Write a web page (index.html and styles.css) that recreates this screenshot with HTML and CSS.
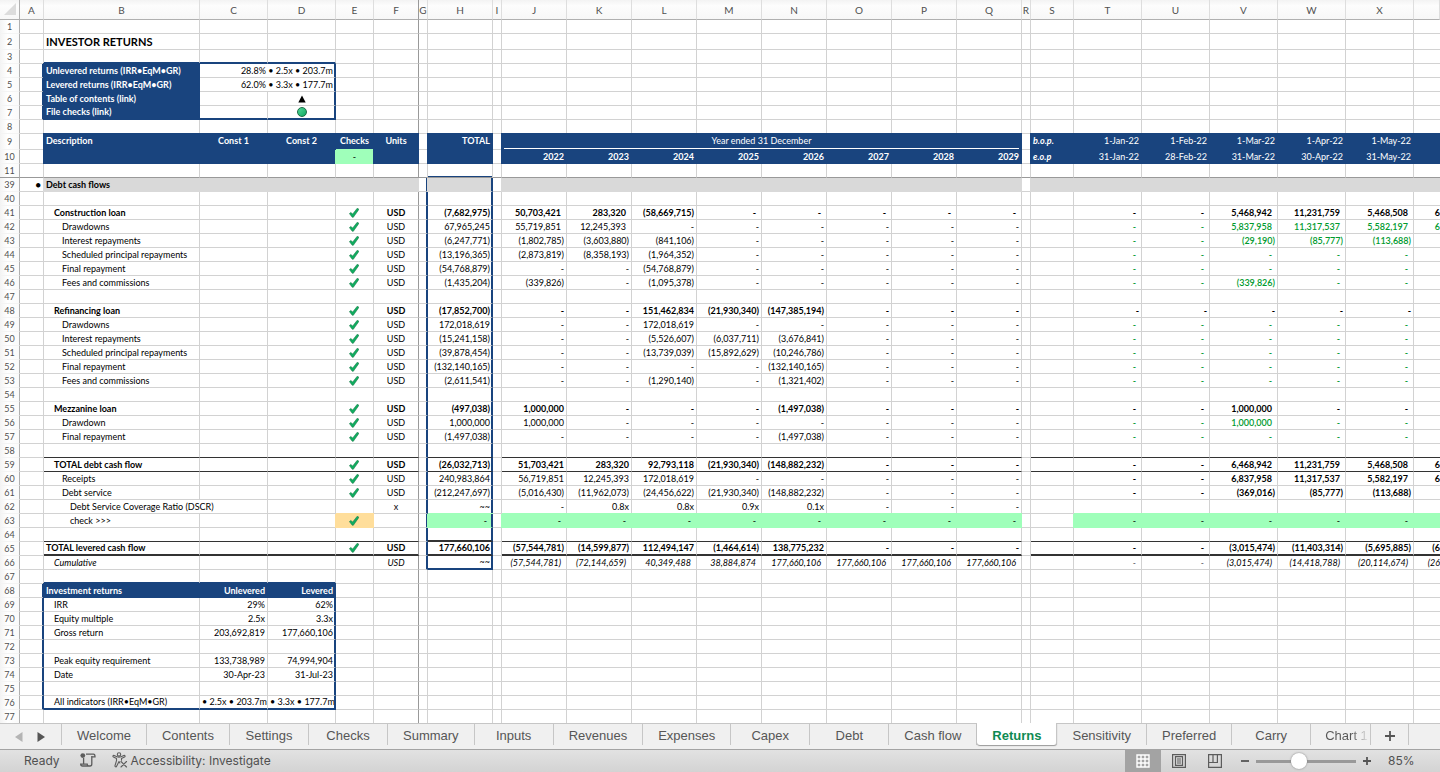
FILE: index.html
```html
<!DOCTYPE html>
<html lang="en">
<head>
<meta charset="utf-8">
<title>Investor Returns</title>
<link rel="stylesheet" href="styles.css">
</head>
<body>
<main class="sheet">
  <table class="grid" id="grid">
    <colgroup>
      <col class="w-head"><col class="w-a"><col class="w-b"><col class="w-month" span="2"><col class="w-e"><col class="w-f">
      <col class="w-gap"><col class="w-year"><col class="w-gap"><col class="w-year" span="8"><col class="w-gap">
      <col class="w-s"><col class="w-month" span="5"><col>
    </colgroup>
    <thead><tr id="letters"></tr></thead>
    <tbody id="rows"></tbody>
  </table>
</main>

<nav class="tabs" aria-label="Sheets">
  <div class="tab-nav">
    <button class="arrow" aria-label="Previous sheets"><svg width="8" height="10" viewBox="0 0 8 10"><path d="M7.500 0v10L0 5z" fill="#b4b4b4"/></svg></button>
    <button class="arrow" aria-label="Next sheets"><svg width="8" height="10" viewBox="0 0 8 10"><path d="M.5 0v10L8 5z" fill="#555"/></svg></button>
  </div>
  <button class="tab">Welcome</button>
  <button class="tab">Contents</button>
  <button class="tab">Settings</button>
  <button class="tab">Checks</button>
  <button class="tab">Summary</button>
  <button class="tab">Inputs</button>
  <button class="tab">Revenues</button>
  <button class="tab">Expenses</button>
  <button class="tab">Capex</button>
  <button class="tab">Debt</button>
  <button class="tab">Cash flow</button>
  <button class="tab active" aria-current="page">Returns</button>
  <button class="tab">Sensitivity</button>
  <button class="tab">Preferred</button>
  <button class="tab">Carry</button>
  <button class="tab fading">Chart 1</button>
  <button class="tab add" aria-label="Add sheet"><svg width="10" height="10" viewBox="0 0 10 10"><path d="M5 0v10M0 5h10" stroke="#555" stroke-width="1.800"/></svg></button>
</nav>

<footer class="status">
  <span class="ready">Ready</span>
  <button class="tool macro" aria-label="Record macro"><svg width="16" height="14" viewBox="0 0 16 14" fill="none" stroke="#5c5c5c" stroke-width="1.300"><circle cx="2.800" cy="2.600" r="2.400" fill="#5c5c5c" stroke="none"/><path d="M6 1.200h7.500c1.300 0 1.500 1 1.500 2.600h-3.200M11.800 3v8c0 1.200-.6 2-1.800 2H2.500c-1.200 0-1.800-.6-1.800-1.800h6.500c0 1.200.6 1.800 1.600 1.800M3.600 5v6"/></svg></button>
  <button class="tool access"><svg width="16" height="16" viewBox="0 0 16 16" fill="none" stroke="#5c5c5c" stroke-width="1.100" stroke-linejoin="round" stroke-linecap="round"><circle cx="7" cy="2.400" r="1.700"/><path d="M5 4.700 2.200 3.400C1 3 .4 4.500 1.500 5l3 1.400v2.300L3 13.700c-.3 1.200 1.200 1.600 1.600.6L7 9.500l.8 1.400M9 4.700l2.800-1.300c1.200-.4 1.800 1.100.7 1.600l-3 1.400v1.800M5 4.700c1.300.5 2.700.5 4 0M9 9.500l5.500 5.500M14.500 9.500 9 15"/></svg><span>Accessibility: Investigate</span></button>
  <div class="views">
    <button class="view on" aria-label="Normal view"><svg width="14" height="14" viewBox="0 0 14 14" fill="none" stroke="#fff" stroke-width="1.400"><path d="M1 1h12v12H1zM1 5h12M1 9h12M5 1v12M9 1v12"/></svg></button>
    <button class="view" aria-label="Page layout view"><svg width="14" height="14" viewBox="0 0 14 14" fill="none" stroke="#5c5c5c" stroke-width="1.200"><path d="M.6.600h12.800v12.800H.6zM3.500 2.600h7v8.800h-7zM5 5h4M5 7h4M5 9h4"/></svg></button>
    <button class="view" aria-label="Page break preview"><svg width="14" height="14" viewBox="0 0 14 14" fill="none" stroke="#5c5c5c" stroke-width="1.200"><path d="M.6.600h12.800v12.800H.6zM.6 8.500h8.800V.600M5 .600v7.900"/></svg></button>
  </div>
  <div class="zoom">
    <button class="tool" aria-label="Zoom out"><svg width="8" height="8" viewBox="0 0 8 8"><path d="M0 4h8" stroke="#555" stroke-width="1.800"/></svg></button>
    <input class="slider" type="range" min="0" max="100" value="42" aria-label="Zoom">
    <button class="tool" aria-label="Zoom in"><svg width="8" height="8" viewBox="0 0 8 8"><path d="M0 4h8M4 0v8" stroke="#555" stroke-width="1.800"/></svg></button>
    <span class="percent">85%</span>
  </div>
</footer>
<script src="sheet.js"></script>
</body>
</html>
```
FILE: styles.css
```css
* { box-sizing: border-box; }
html, body { height: 100%; }
body {
  margin: 0;
  display: flex;
  flex-direction: column;
  overflow: hidden;
  background: #fff;
  color: #000;
  font-family: Lato, "Open Sans", sans-serif;
  font-size: 9px;
}
button {
  border: 0;
  padding: 0;
  background: none;
  font: inherit;
  color: inherit;
}
svg { display: block; }

/* Sheet */
.sheet { flex: 1; min-height: 0; overflow: hidden; }
.grid {
  width: 100%;
  min-width: 1440px;
  table-layout: fixed;
  border-collapse: separate;
  border-spacing: 0;
}
.w-head { width: 20px; }
.w-a { width: 24px; }
.w-b { width: 156px; }
.w-month { width: 68px; }
.w-e { width: 38px; }
.w-f { width: 45px; }
.w-gap { width: 9px; }
.w-year { width: 65px; }
.w-s { width: 43px; }

.grid th, .grid td {
  height: 14px;
  padding: 1px 2px 0;
  border: solid #d2d2d2;
  border-width: 0 1px 1px 0;
  line-height: 12px;
  white-space: nowrap;
  overflow: hidden;
  text-align: right;
  vertical-align: middle;
}
.grid thead th {
  height: 20px;
  padding: 0;
  border-color: #dedede;
  border-bottom-color: #b0b0b0;
  background: linear-gradient(#f3f3f3, #fdfdfd 30%, #f7f7f7);
  color: #505050;
  font-size: 10px;
  font-weight: 400;
  text-align: center;
}
.grid tbody th {
  padding: 1px 0 0;
  border-color: #f4f4f4;
  border-right-color: #b0b0b0;
  background: linear-gradient(90deg, #f3f3f3, #fff 40%, #fafafa);
  color: #505050;
  font-size: 9px;
  font-weight: 400;
  text-align: center;
}
.grid thead th.corner { border-right-color: #b0b0b0; }
.corner svg { margin: 0 0 0 auto; }
.grid tr.snug td, .grid tr.snug th { padding-top: 0; }
.grid tr.tall td, .grid tr.tall th { height: 16px; }
.grid tr.heading td { vertical-align: top; }
.grid td.text { text-align: left; }
.grid td.center { text-align: center; }
.grid td.in1 { padding-left: 10px; }
.grid td.in2 { padding-left: 18px; }
.grid td.in3 { padding-left: 26px; }
.grid td.pad { padding-right: 5px; }
.grid td.icon { padding: 0 4px 0 2px; }
.grid td.cut { padding-left: 0; padding-right: 0; border-right: 0; }
.grid td.bold { font-weight: 700; }
.grid td.italic { font-style: italic; }
.grid td.green { color: #009a2e; font-weight: 600; }
.grid td.title { font-size: 11px; font-weight: 700; }

/* Fills run over the grid lines on every side */
.grid td.navy {
  background: #19447e;
  border-color: #19447e;
  box-shadow: -1px 0 #19447e, 0 -1px #19447e, -1px -1px #19447e;
  color: #fff;
}
.grid td.grey { background: #d9d9d9; border-color: #d9d9d9; box-shadow: -1px 0 #d9d9d9; }
.grid td.mint {
  background: #9fffba;
  border-color: #9fffba;
  box-shadow: -1px 0 #9fffba, 0 -1px #9fffba;
  color: #000;
}
.grid td.amber { background: #ffde9b; border-color: #ffde9b; box-shadow: -1px 0 #ffde9b, 0 -1px #ffde9b; }

/* Rules and boxes */
.grid td.rule { border-bottom-color: #333; }
.grid td.rule2 { border-bottom: 2px solid #333; }
.grid td.box-r { border-right: 2px solid #19447e; padding-right: 1px; }
.grid td.box-r.pad { padding-right: 4px; }
.grid td.box-b { border-bottom: 2px solid #19447e; }
.grid .pane-b { border-bottom-color: #999; }
.grid td.pane-b.box-top { box-shadow: inset 0 -1px #19447e; }
.grid .pane-r { border-right-color: #999; }
.year-head {
  display: block;
  height: 14px;
  border-bottom: 1px solid #fff;
}
.link { display: block; color: inherit; text-decoration: none; }
.triangle, .tick { margin: 0 auto; }
.dot {
  display: block;
  width: 10px;
  height: 10px;
  margin: 0 auto;
  border: 1px solid #1a6b45;
  border-radius: 50%;
  background: linear-gradient(135deg, #4fd896, #12a862);
}

/* Sheet tabs */
.tabs {
  display: flex;
  height: 26px;
  border-top: 1px solid #c6c6c6;
  background: #f0f0f0;
  color: #565656;
  font-family: "Liberation Sans", Arial, sans-serif;
  font-size: 13px;
}
.tab-nav {
  display: flex;
  justify-content: space-between;
  width: 62px;
  height: 21px;
  padding: 5px 16px 0 15px;
  border-right: 1px solid #c6c6c6;
}
.tab {
  min-width: 79px;
  height: 21px;
  padding: 2px 15px 0;
  border-right: 1px solid #c6c6c6;
  white-space: nowrap;
}
.tab.active {
  height: 22px;
  margin-top: -1px;
  border-radius: 0 0 3px 3px;
  background: #fff;
  box-shadow: 0 1px 1px #999;
  color: #0e8a52;
  font-weight: 700;
}
.tab.fading {
  min-width: 0;
  width: 60px;
  padding: 2px 0 0 14px;
  text-align: left;
  color: transparent;
  background: linear-gradient(90deg, #565656 70%, #f0f0f0 98%) text;
}
.tab.add { min-width: 0; width: 38px; padding: 2px 14px 0; }

/* Status bar */
.status {
  display: flex;
  align-items: center;
  height: 23px;
  border-top: 1px solid #a3a3a3;
  background: linear-gradient(#e2e2e2, #d3d3d3);
  color: #505050;
  font-family: Inter, sans-serif;
  font-size: 12px;
}
.ready { padding: 0 0 2px 24px; }
.tool { display: flex; align-items: center; }
.macro { margin-left: 20px; padding-bottom: 2px; }
.access { gap: 3px; margin-left: 16px; padding-bottom: 2px; }
.views { display: flex; height: 100%; margin-left: auto; }
.view { display: grid; place-items: center; width: 36px; height: 100%; }
.view.on { background: #a3a3a3; }
.zoom { display: flex; align-items: center; gap: 7px; padding-left: 8px; }
.slider {
  appearance: none;
  width: 100px;
  height: 16px;
  margin: 0;
  background: linear-gradient(#999, #999) center / 100% 3px no-repeat;
}
.slider::-webkit-slider-thumb {
  appearance: none;
  width: 16px;
  height: 16px;
  border-radius: 50%;
  background: #fff;
  box-shadow: 0 0 2px #777;
}
.percent { width: 62px; padding: 0 0 2px 10px; }
```
FILE: sheet.js
```js
const letters = 'ABCDEFGHIJKLMNOPQRSTUVWXY'.split('');
const years = 'JKLMNOPQ'.split('');
const months = 'TUVWXY'.split('');
const cells = {};
const classes = {};
const spans = {};

const tick = '<svg class="tick" width="10" height="10" viewBox="0 0 10 10" role="img" aria-label="OK"><path d="M.4 5.600 1.800 4.500 3.700 6 8.200.300 9.700 1 9.200 2.400 4.300 9.300 3.200 9.200z" fill="#0fae60" stroke="#1d7a4a" stroke-width=".6" stroke-linejoin="round"/></svg>';
const triangle = '<svg class="triangle" width="8" height="8" viewBox="0 0 8 8"><path d="M4 .500 7.700 7.500H.3z"/></svg>';

// mark('B9:F10', 'navy') adds a class to every cell of a range
function mark(ranges, names) {
  for (const range of ranges.split(' ')) {
    const [from, to = from] = range.split(':');
    const c1 = letters.indexOf(from[0]), c2 = letters.indexOf(to[0]);
    for (let r = +from.slice(1); r <= +to.slice(1); r++)
      for (let c = c1; c <= c2; c++)
        classes[letters[c] + r] = (classes[letters[c] + r] || '') + ' ' + names;
  }
}

// One cash flow line: label, unit, total, yearly and monthly figures
function line(r, indent, label, unit, total, yearly, monthly) {
  cells['B' + r] = label;
  mark('B' + r, 'in' + indent);
  if (r !== 62 && r !== 66) {
    cells['E' + r] = tick;
    mark('E' + r, 'icon');
  }
  cells['F' + r] = unit;
  cells['H' + r] = total;
  yearly.split(' ').forEach((v, i) => cells[years[i] + r] = v);
  if (monthly) monthly.split(' ').forEach((v, i) => cells[months[i] + r] = v);
}

Object.assign(cells, {
  B2: 'INVESTOR RETURNS',
  B4: 'Unlevered returns (IRR•EqM•GR)', C4: '28.8% • 2.5x • 203.7m',
  B5: 'Levered returns (IRR•EqM•GR)', C5: '62.0% • 3.3x • 177.7m',
  B6: 'Table of contents (link)', D6: `<a class="link" href="#grid" aria-label="Table of contents">${triangle}</a>`,
  B7: 'File checks (link)', D7: '<a class="link" href="#grid" aria-label="File checks"><span class="dot"></span></a>',
  B9: 'Description', C9: 'Const 1', D9: 'Const 2', E9: 'Checks', F9: 'Units', H9: 'TOTAL',
  J9: '<span class="year-head">Year ended 31 December</span>', E10: '-',
  S9: 'b.o.p.', T9: '1-Jan-22', U9: '1-Feb-22', V9: '1-Mar-22', W9: '1-Apr-22', X9: '1-May-22',
  S10: 'e.o.p', T10: '31-Jan-22', U10: '28-Feb-22', V10: '31-Mar-22', W10: '30-Apr-22', X10: '31-May-22',
  A39: '●', B39: 'Debt cash flows',
  B68: 'Investment returns', C68: 'Unlevered', D68: 'Levered',
  B69: 'IRR', C69: '29%', D69: '62%',
  B70: 'Equity multiple', C70: '2.5x', D70: '3.3x',
  B71: 'Gross return', C71: '203,692,819', D71: '177,660,106',
  B73: 'Peak equity requirement', C73: '133,738,989', D73: '74,994,904',
  B74: 'Date', C74: '30-Apr-23', D74: '31-Jul-23',
  B76: 'All indicators (IRR•EqM•GR)', C76: '• 2.5x • 203.7m', D76: '• 3.3x • 177.7m'
});
years.forEach((c, i) => cells[c + 10] = String(2022 + i));

line(41, 1, 'Construction loan', 'USD', '(7,682,975)', '50,703,421 283,320 (58,669,715) - - - - -', '- - 5,468,942 11,231,759 5,468,508 6');
line(42, 2, 'Drawdowns', 'USD', '67,965,245', '55,719,851 12,245,393 - - - - - -', '- - 5,837,958 11,317,537 5,582,197 6');
line(43, 2, 'Interest repayments', 'USD', '(6,247,771)', '(1,802,785) (3,603,880) (841,106) - - - - -', '- - (29,190) (85,777) (113,688)');
line(44, 2, 'Scheduled principal repayments', 'USD', '(13,196,365)', '(2,873,819) (8,358,193) (1,964,352) - - - - -', '- - - - -');
line(45, 2, 'Final repayment', 'USD', '(54,768,879)', '- - (54,768,879) - - - - -', '- - - - -');
line(46, 2, 'Fees and commissions', 'USD', '(1,435,204)', '(339,826) - (1,095,378) - - - - -', '- - (339,826) - -');
line(48, 1, 'Refinancing loan', 'USD', '(17,852,700)', '- - 151,462,834 (21,930,340) (147,385,194) - - -', '- - - - -');
line(49, 2, 'Drawdowns', 'USD', '172,018,619', '- - 172,018,619 - - - - -', '- - - - -');
line(50, 2, 'Interest repayments', 'USD', '(15,241,158)', '- - (5,526,607) (6,037,711) (3,676,841) - - -', '- - - - -');
line(51, 2, 'Scheduled principal repayments', 'USD', '(39,878,454)', '- - (13,739,039) (15,892,629) (10,246,786) - - -', '- - - - -');
line(52, 2, 'Final repayment', 'USD', '(132,140,165)', '- - - - (132,140,165) - - -', '- - - - -');
line(53, 2, 'Fees and commissions', 'USD', '(2,611,541)', '- - (1,290,140) - (1,321,402) - - -', '- - - - -');
line(55, 1, 'Mezzanine loan', 'USD', '(497,038)', '1,000,000 - - - (1,497,038) - - -', '- - 1,000,000 - -');
line(56, 2, 'Drawdown', 'USD', '1,000,000', '1,000,000 - - - - - - -', '- - 1,000,000 - -');
line(57, 2, 'Final repayment', 'USD', '(1,497,038)', '- - - - (1,497,038) - - -', '- - - - -');
line(59, 1, 'TOTAL debt cash flow', 'USD', '(26,032,713)', '51,703,421 283,320 92,793,118 (21,930,340) (148,882,232) - - -', '- - 6,468,942 11,231,759 5,468,508 6');
line(60, 2, 'Receipts', 'USD', '240,983,864', '56,719,851 12,245,393 172,018,619 - - - - -', '- - 6,837,958 11,317,537 5,582,197 6');
line(61, 2, 'Debt service', 'USD', '(212,247,697)', '(5,016,430) (11,962,073) (24,456,622) (21,930,340) (148,882,232) - - -', '- - (369,016) (85,777) (113,688)');
line(62, 3, 'Debt Service Coverage Ratio (DSCR)', 'x', '~~', '- 0.8x 0.8x 0.9x 0.1x - - -', '');
line(63, 3, 'check &gt;&gt;&gt;', '', '-', '- - - - - - - -', '- - - - -');
line(65, 0, 'TOTAL levered cash flow', 'USD', '177,660,106', '(57,544,781) (14,599,877) 112,494,147 (1,464,614) 138,775,232 - - -', '- - (3,015,474) (11,403,314) (5,695,885) (6');
line(66, 1, 'Cumulative', 'USD', '~~', '(57,544,781) (72,144,659) 40,349,488 38,884,874 177,660,106 177,660,106 177,660,106 177,660,106', '- - (3,015,474) (14,418,788) (20,114,674) (26');

mark('B1:B77 S1:S77', 'text');
mark('E1:F77 C9:D9 D6:D7 J9', 'center');
mark('D6:D7', 'icon');
mark('B2', 'title');
mark('B4:B7 B9:F10 H9:H10 J9:Q10 S9:Y10 B68:D68', 'navy');
mark('B4:B7 B9:F9 H9 J10:Q10 S9:S10 B39 B68:D68', 'bold');
mark('S9:S10 B66:Y66', 'italic');
mark('E10 H63 J63:Q63 T63:Y63', 'mint');
mark('E63', 'amber');
mark('B39:F39 H39 J39:Q39 S39:Y39', 'grey');
mark('B41:Y41 B48:Y48 B55:Y55 B59:Y59 T60:Y61 B65:Y65', 'bold');
mark('T42:Y46 T49:Y53 T56:Y57', 'green');
mark('B69:B76', 'in1');
mark('B58:F58 H58 J58:Q58 S58:Y58 B59:F59 H59 J59:Q59 S59:Y59 B64:F64 J64:Q64 S64:Y64', 'rule');
mark('H64 B65:F65 H65 J65:Q65 S65:Y65', 'rule2');
mark('A4:A7 D6:D7 A68:A76 D68:D76 G39:G66 H39:H66', 'box-r');
mark('C4:C5', 'box-r');
mark('B3:D3 B7:D7 B67:D67 B76:D76 H66', 'box-b');
mark('A11:Y11', 'pane-b');
mark('H11', 'box-top');
mark('F1:F77', 'pane-r');
mark('Y1:Y77', 'cut');
Object.assign(spans, { C4: 2, C5: 2, J9: 8, B62: 2 });

const bracketRoom = /^([J-K]42|[J-Q]41|[J-Q]63|H63|[J-Q]66|[T-X](4[1-6]|49|5[0-9]|6[0-6]))$/;
const snugRows = [2, 3, 7, 10, 64, 65, 66, 67, 76];
const rowClasses = { 2: 'tall', 9: 'tall heading' };

document.getElementById('letters').innerHTML =
  '<th class="corner"><svg width="15" height="15" viewBox="0 0 15 15"><path d="M12 1v12H0z" fill="#dcdcdc"/></svg></th>' +
  letters.map(c => `<th scope="col" class="${c === 'F' ? 'pane-r' : c === 'Y' ? 'cut' : ''}">${c === 'Y' ? '' : c}</th>`).join('');

const rowNumbers = [...Array(11).keys()].map(i => i + 1).concat([...Array(39).keys()].map(i => i + 39));
document.getElementById('rows').innerHTML = rowNumbers.map(r => {
  const rowClass = [rowClasses[r], snugRows.includes(r) ? 'snug' : ''].filter(Boolean).join(' ');
  let html = `<tr class="${rowClass}"><th scope="row"${r === 11 ? ' class="pane-b"' : ''}>${r}</th>`;
  for (let c = 0; c < letters.length; c++) {
    const id = letters[c] + r;
    const value = cells[id] || '';
    const pad = bracketRoom.test(id) && (!value.endsWith(')') || r === 66) ? ' pad' : '';
    const span = spans[id] || 1;
    html += `<td class="${((classes[id] || '') + pad).trim()}"${span > 1 ? ` colspan="${span}"` : ''}>${value}</td>`;
    c += span - 1;
  }
  return html + '</tr>';
}).join('');
```
